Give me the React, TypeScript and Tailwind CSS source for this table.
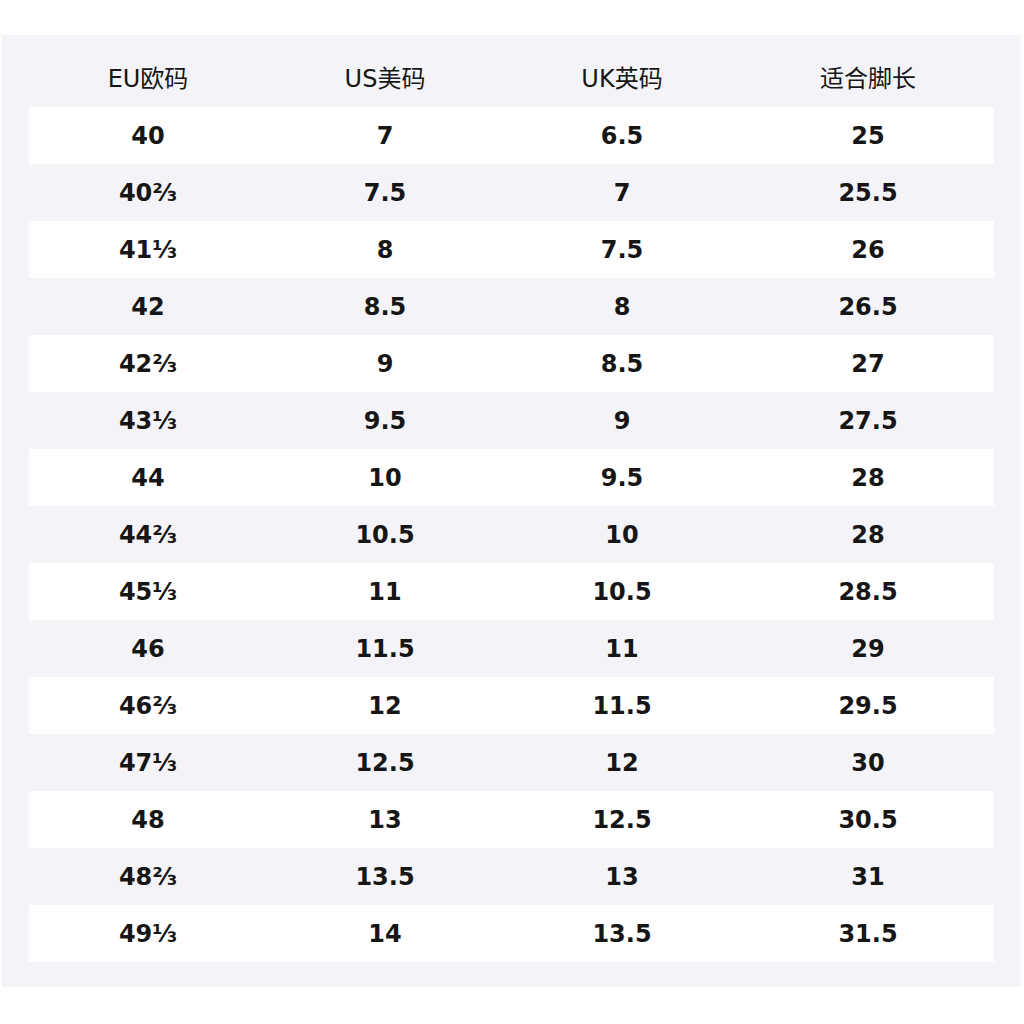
const rows: [string, string, string, string][] = [
  ['40', '7', '6.5', '25'],
  ['40⅔', '7.5', '7', '25.5'],
  ['41⅓', '8', '7.5', '26'],
  ['42', '8.5', '8', '26.5'],
  ['42⅔', '9', '8.5', '27'],
  ['43⅓', '9.5', '9', '27.5'],
  ['44', '10', '9.5', '28'],
  ['44⅔', '10.5', '10', '28'],
  ['45⅓', '11', '10.5', '28.5'],
  ['46', '11.5', '11', '29'],
  ['46⅔', '12', '11.5', '29.5'],
  ['47⅓', '12.5', '12', '30'],
  ['48', '13', '12.5', '30.5'],
  ['48⅔', '13.5', '13', '31'],
  ['49⅓', '14', '13.5', '31.5'],
];

const headers = ['EU欧码', 'US美码', 'UK英码', '适合脚长'];

const grid = 'grid grid-cols-[238px_236px_238px_254px] h-[57px] items-center text-center';

export default function App() {
  return (
    <div
      className="w-[1024px] h-[1024px] bg-white pt-[35px] pl-[2px]"
      style={{ fontFamily: '"DejaVu Sans", "Noto Sans CJK SC", sans-serif' }}
    >
      <div className="w-[1019px] bg-[#f4f4f8] pt-[15px] pb-[25px] px-[27px] text-[#161616]">
        <div className={`${grid} text-[24px]`}>
          {headers.map((h) => (
            <div key={h}>{h}</div>
          ))}
        </div>
        {rows.map((r, i) => (
          <div key={i} className={`${grid} text-[24px] font-bold ${i % 2 === 0 ? 'bg-white' : ''}`}>
            {r.map((c, j) => (
              <div key={j}>{c}</div>
            ))}
          </div>
        ))}
      </div>
    </div>
  );
}
